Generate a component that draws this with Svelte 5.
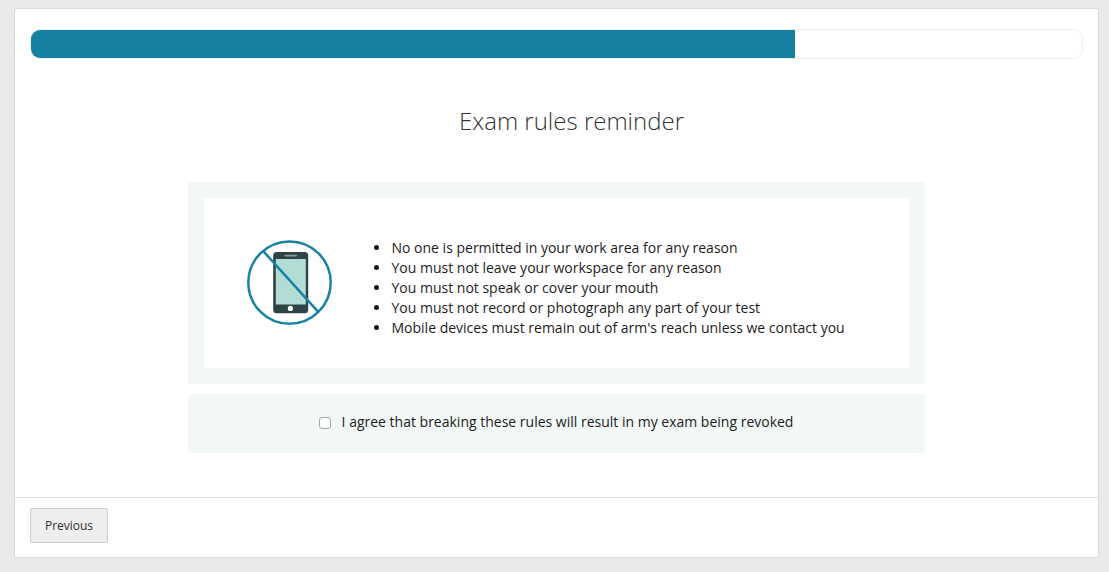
<script>
  const progress = 72.7;
  const rules = [
    'No one is permitted in your work area for any reason',
    'You must not leave your workspace for any reason',
    'You must not speak or cover your mouth',
    'You must not record or photograph any part of your test',
    "Mobile devices must remain out of arm's reach unless we contact you"
  ];
  let agreed = $state(false);
</script>

<main class="card">
  <div class="body">
    <div class="progress"><div class="fill" style="width: {progress}%"></div></div>
    <h1>Exam rules reminder</h1>
    <section class="panel">
      <div class="rules">
        <svg class="icon" width="86" height="86" viewBox="0 0 86 86" aria-hidden="true">
          <rect x="26.2" y="12" width="35" height="61.2" rx="3.5" fill="#2e4347" />
          <rect x="28.8" y="19" width="30" height="45.5" fill="#b2ddd4" />
          <rect x="37.5" y="14.8" width="12.5" height="1.7" rx="0.8" fill="#8e999b" />
          <circle cx="43.4" cy="68.4" r="2.6" fill="#fff" />
          <circle cx="42.5" cy="42.6" r="41.2" fill="none" stroke="#1782a3" stroke-width="2.5" />
          <path d="M16.3 11.2 L71.2 71.8" stroke="#1782a3" stroke-width="2.5" />
        </svg>
        <ul>
          {#each rules as rule}
            <li><span>{rule}</span></li>
          {/each}
        </ul>
      </div>
    </section>
    <label class="agree">
      <input type="checkbox" bind:checked={agreed} />
      <span>I agree that breaking these rules will result in my exam being revoked</span>
    </label>
  </div>
  <footer><button type="button">Previous</button></footer>
</main>

<style>
  :global(body) {
    background: #eaeaea;
    overflow: hidden;
  }
  .card {
    box-sizing: border-box;
    width: 1085px;
    height: 550px;
    margin: 8px 0 0 14px;
    display: flex;
    flex-direction: column;
    background: #fff;
    border: 1px solid #dadada;
    border-radius: 2px;
    box-shadow: 0 1px 1px rgba(0, 0, 0, 0.05);
    font-family: 'Open Sans', sans-serif;
    font-size: 14px;
    line-height: 20px;
    color: #1c1c1c;
  }
  .body {
    flex: 1;
    padding: 20px 15px 0;
  }
  .progress {
    box-sizing: border-box;
    height: 30px;
    border: 1px solid #eee;
    border-radius: 10px;
    overflow: hidden;
  }
  .fill {
    height: 100%;
    background: #1680a1;
  }
  h1 {
    margin: 45px 0 0 30px;
    text-align: center;
    font-size: 24px;
    line-height: 34px;
    font-weight: 300;
    color: #333;
  }
  .panel {
    box-sizing: border-box;
    width: 737px;
    height: 202px;
    margin: 44px 0 0 158px;
    padding: 16px;
    background: #f2f8f6;
    border-radius: 4px;
  }
  .rules {
    box-sizing: border-box;
    height: 170px;
    padding: 40px 0 0 43px;
    display: flex;
    align-items: flex-start;
    background: #fff;
  }
  .icon {
    margin-top: 2px;
    flex: none;
  }
  ul {
    margin: 0 0 0 38px;
    padding: 0;
    list-style: none;
  }
  li {
    display: flex;
    align-items: center;
    gap: 12.5px;
    white-space: nowrap;
  }
  li::before {
    content: '';
    width: 5px;
    height: 5px;
    margin: 0 0 1px 3px;
    border-radius: 50%;
    background: #1c1c1c;
  }
  .agree {
    box-sizing: border-box;
    width: 737px;
    height: 59px;
    margin: 10px 0 0 158px;
    padding: 18px 0 0 131px;
    display: flex;
    align-items: flex-start;
    gap: 10.6px;
    background: #f2f8f6;
    border-radius: 4px;
    white-space: nowrap;
  }
  input {
    appearance: none;
    box-sizing: border-box;
    width: 12px;
    height: 12px;
    margin: 5px 0 0;
    flex: none;
    border: 1px solid #a8a8a8;
    border-radius: 3px;
    background: #fff;
  }
  input:checked {
    background: #1680a1;
  }
  footer {
    box-sizing: border-box;
    height: 60px;
    padding: 10px 15px;
    border-top: 1px solid #e4e4e4;
  }
  button {
    box-sizing: border-box;
    width: 78px;
    height: 35px;
    padding: 0;
    border: 1px solid #ccc;
    border-radius: 2px;
    background: #eee;
    font-family: inherit;
    font-size: 12px;
    color: #333;
  }
</style>
